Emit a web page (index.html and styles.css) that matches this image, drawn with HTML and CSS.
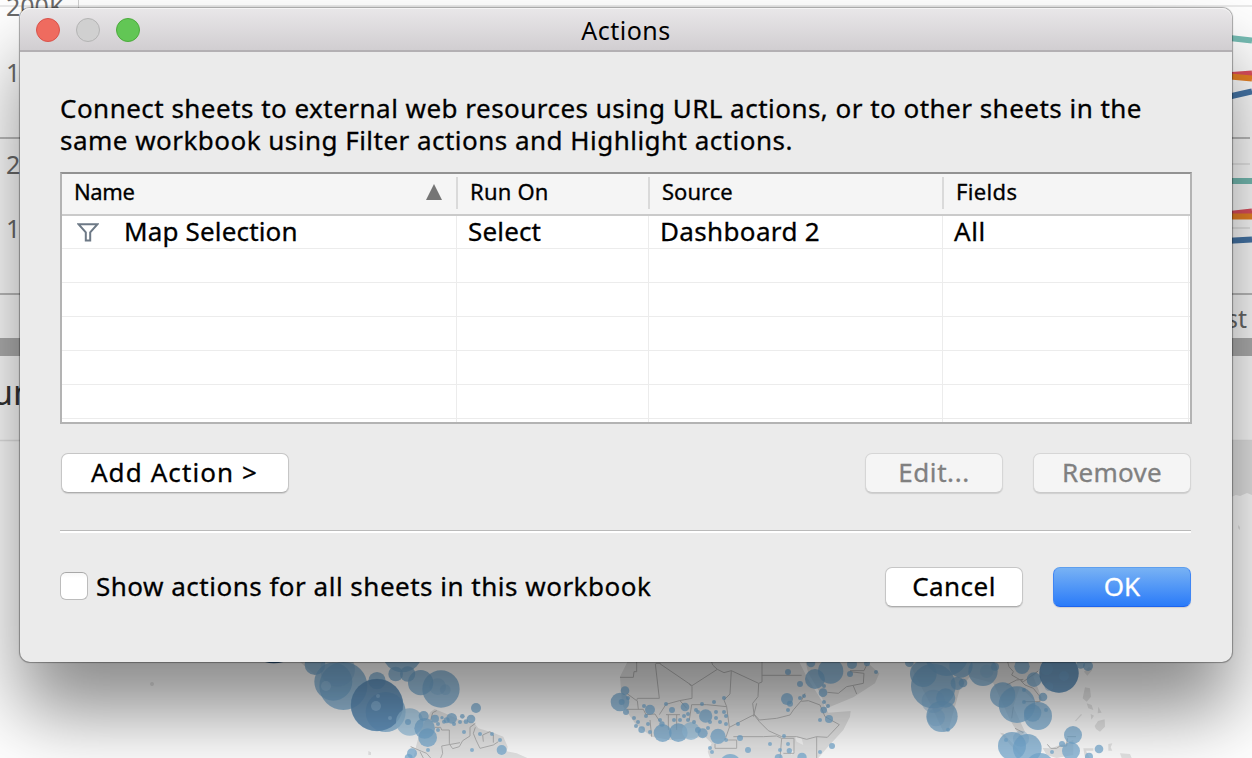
FILE: index.html
```
<!DOCTYPE html>
<html lang="en">
<head>
<meta charset="utf-8">
<title>Actions</title>
<link rel="stylesheet" href="styles.css">
</head>
<body>
<svg class="backdrop" viewBox="0 0 1252 758" aria-hidden="true">
  <g class="axis">
    <path class="rule-light" d="M0 6H1252M1232 164H1250M1232 228H1250M0 440.5H1252"/>
    <path class="rule-side" d="M78.500 0V137"/>
    <path class="rule" d="M0 138H1250M0 294H1252"/>
    <path class="bar" d="M0 338H1252V356H0z"/>
    <text x="6" y="16">200K</text>
    <text x="6" y="82">100K</text>
    <text x="6" y="174">200K</text>
    <text x="6" y="238">100K</text>
    <text x="1226" y="328">st</text>
    <text class="heading" x="-8" y="405">un</text>
  </g>
  <g class="lines">
    <path stroke="#76bdb4" d="M1225 37.500L1252 40.500M1225 181H1252"/>
    <path stroke="#dd4f5e" d="M1225 75.500L1252 73.500M1225 214.500L1252 211.500"/>
    <path stroke="#e98325" d="M1225 76L1252 78.500M1225 216.500H1252"/>
    <path stroke="#4676a8" d="M1225 97.500L1252 91.500M1225 241L1252 239.500"/>
  </g>
  <path class="land" d="M1225 441H1252V495L1247 493L1240 496L1236 495L1231 497zM1238 525l2 2v3l-2-2z"/>
  <g transform="translate(240 640) scale(.333333)">
    <path class="land" d="M520 354L530 312L545 260L572 215L584 207L620 222L660 240L700 245L715 265L760 278L790 290L803 320L800 334L830 340L862 354zM385 333l8 4v8h-8zM180 66L225 105L250 66z"/>
    <path class="border" d="M572 240L578 218L590 212M585 262H602L605 270H628V312L638 326L658 320L668 302L690 288V262L706 250M706 262L700 280L708 300L720 325L760 315L775 305M730 305L728 285L750 275L760 285V308M660 308L605 318L608 340L602 354M512 320L545 334L560 340L572 354M540 335L550 354"/>
    <path class="dots-dark" d="M75 66Q100 74 130 66z"/>
    <g class="bubbles">
      <circle cx="225" cy="74" r="31"/><circle cx="280" cy="125" r="57"/><circle cx="310" cy="138" r="72"/><circle cx="293" cy="88" r="52" opacity=".6"/>
      <circle cx="258" cy="138" r="15" class="pale"/><circle cx="411" cy="122" r="26"/><circle cx="411" cy="195" r="79"/><circle cx="437" cy="216" r="60"/><circle cx="411" cy="195" r="78" class="deep"/>
      <circle cx="408" cy="198" r="15" class="pale"/><circle cx="414" cy="168" r="6" class="pale"/><circle cx="450" cy="234" r="6" class="pale"/>
      <circle cx="487" cy="37" r="60"/><circle cx="467" cy="102" r="22"/><circle cx="503" cy="102" r="23"/><circle cx="542" cy="128" r="38"/><circle cx="603" cy="147" r="56"/><circle cx="593" cy="140" r="25" opacity=".5"/><circle cx="616" cy="149" r="16" opacity=".5"/>
      <circle cx="509" cy="246" r="41" class="soft"/><circle cx="504" cy="246" r="9"/><circle cx="551" cy="228" r="15"/><circle cx="554" cy="265" r="31"/><circle cx="563" cy="293" r="28"/><circle cx="585" cy="236" r="12"/>
      <circle cx="708" cy="204" r="15"/><circle cx="693" cy="237" r="13"/><circle cx="635" cy="235" r="16"/><circle cx="620" cy="241" r="9"/><circle cx="606" cy="233" r="5"/><circle cx="612" cy="245" r="6"/><circle cx="642" cy="252" r="6"/><circle cx="660" cy="246" r="6"/><circle cx="667" cy="229" r="7"/><circle cx="678" cy="245" r="7"/><circle cx="672" cy="276" r="6"/><circle cx="594" cy="252" r="6"/><circle cx="594" cy="270" r="6"/><circle cx="720" cy="282" r="6"/><circle cx="756" cy="282" r="6"/><circle cx="780" cy="300" r="6"/><circle cx="785" cy="330" r="15"/><circle cx="696" cy="330" r="6"/><circle cx="564" cy="330" r="6"/><circle cx="516" cy="340" r="15"/><circle cx="506" cy="354" r="12"/>
    </g>
  </g>
  <g transform="translate(560 640) scale(.333333)">
    <path class="land" d="M205 60L180 110L185 175L190 200L225 250L275 290L330 300L390 295L435 290L455 310L443 335L450 354H775L800 325L850 270L870 230L872 213L805 218L790 190L740 110L715 60zM735 60L745 100L775 150L800 205L880 172L945 130L958 100L920 66z"/>
    <path class="void" d="M705 290l20 5 5 20-20-10zM690 330l14 5-10 10z"/>
    <path class="border" d="M180 112H220L222 95H230V66M302 70H288L286 72L298 175H232L230 182L200 160M298 70L386 130L396 137L472 88L458 75L455 66M386 130L396 140V175L358 182L318 193L298 224M472 88L492 98L514 92L596 130L606 126V66M606 106H725M596 130L594 170L578 190L582 222L598 240L650 235L690 225L700 210L724 182L735 160M514 92L510 162L492 180L500 200L440 194L395 194L388 240M500 200L508 262L582 224L598 245L625 272L665 290L710 290L740 298L770 290L802 292L838 254L795 230L780 195L745 182L724 184M200 208H250L258 224L285 222L300 245M318 224H360M325 224V270M350 224V270M360 182L380 205M232 182L235 208M270 240L275 290M508 262L495 300M520 290H610L650 288L665 295L660 354M500 300H530V325H465V312M770 290V354M802 157L835 160L860 140L910 130L912 100L870 95M880 138L890 162M870 92H912L920 75M665 295H702V340H670M590 190L580 230"/>
    <g class="bubbles">
      <circle cx="180" cy="186" r="28"/><circle cx="195" cy="152" r="13"/><circle cx="185" cy="186" r="9"/><circle cx="198" cy="216" r="9"/><circle cx="270" cy="209" r="15"/><circle cx="308" cy="279" r="27"/><circle cx="355" cy="278" r="28"/><circle cx="393" cy="273" r="27" class="soft"/><circle cx="474" cy="289" r="23"/><circle cx="428" cy="280" r="15"/><circle cx="437" cy="228" r="20"/><circle cx="375" cy="201" r="13"/><circle cx="336" cy="210" r="9"/><circle cx="245" cy="269" r="10"/><circle cx="540" cy="294" r="9"/><circle cx="564" cy="330" r="9"/><circle cx="511" cy="374" r="32"/><circle cx="681" cy="177" r="18"/><circle cx="690" cy="191" r="9"/><circle cx="684" cy="96" r="9"/><circle cx="720" cy="132" r="9"/><circle cx="765" cy="117" r="30"/><circle cx="812" cy="93" r="38"/><circle cx="753" cy="69" r="13"/><circle cx="870" cy="102" r="9"/><circle cx="876" cy="72" r="15"/><circle cx="921" cy="70" r="9"/><circle cx="948" cy="96" r="6"/><circle cx="789" cy="158" r="13"/><circle cx="791" cy="210" r="10"/><circle cx="807" cy="237" r="12"/><circle cx="816" cy="318" r="9"/><circle cx="726" cy="352" r="14"/><circle cx="656" cy="354" r="12"/>
      <circle cx="222" cy="234" r="6"/><circle cx="234" cy="246" r="6"/><circle cx="228" cy="258" r="6"/><circle cx="252" cy="198" r="6"/><circle cx="258" cy="228" r="6"/><circle cx="264" cy="252" r="6"/><circle cx="270" cy="276" r="6"/><circle cx="300" cy="240" r="6"/><circle cx="306" cy="252" r="8"/><circle cx="318" cy="192" r="6"/><circle cx="342" cy="240" r="6"/><circle cx="360" cy="240" r="6"/><circle cx="372" cy="228" r="6"/><circle cx="384" cy="222" r="6"/><circle cx="384" cy="240" r="6"/><circle cx="402" cy="246" r="6"/><circle cx="408" cy="210" r="6"/><circle cx="414" cy="216" r="6"/><circle cx="426" cy="192" r="6"/><circle cx="462" cy="186" r="6"/><circle cx="492" cy="174" r="6"/><circle cx="468" cy="216" r="6"/><circle cx="468" cy="234" r="6"/><circle cx="492" cy="216" r="6"/><circle cx="498" cy="228" r="6"/><circle cx="498" cy="252" r="6"/><circle cx="480" cy="246" r="6"/><circle cx="450" cy="246" r="6"/><circle cx="444" cy="264" r="6"/><circle cx="414" cy="270" r="9"/><circle cx="534" cy="252" r="6"/><circle cx="450" cy="324" r="6"/><circle cx="456" cy="336" r="6"/><circle cx="498" cy="300" r="6"/><circle cx="630" cy="312" r="6"/><circle cx="672" cy="288" r="6"/><circle cx="684" cy="312" r="6"/><circle cx="660" cy="330" r="6"/><circle cx="688" cy="332" r="8"/><circle cx="684" cy="210" r="6"/><circle cx="720" cy="174" r="6"/><circle cx="732" cy="168" r="6"/><circle cx="792" cy="186" r="6"/><circle cx="804" cy="198" r="6"/><circle cx="780" cy="240" r="6"/><circle cx="780" cy="336" r="6"/><circle cx="792" cy="138" r="6"/><circle cx="204" cy="174" r="6"/>
    </g>
  </g>
  <g transform="translate(860 640) scale(.333333)">
    <path class="land" d="M145 66L215 200L250 275L265 272L300 145L330 110L400 130L450 240L480 290L495 275L460 200L480 140L530 190L548 180L520 110L560 66zM675 142l15 3 3 25-13 15-12-10zM680 190l15 5 5 15-15-5zM715 200l10 18-12 2zM692 222l10 5-8 12zM704 258l10-15 20-5 1 22-15 15-12-8zM645 242l18-20 3 2-18 20zM548 324L575 325L612 310L640 300V345L590 354L560 345zM420 278l10 2 60 66-10 3zM670 325h30v7h-22l12 22h-15zM745 312l12-2-5 12 5 10h-12zM780 340l30 2 5 12h-30zM672 95l15-15 10 10-15 17z"/>
    <path class="border" d="M443 66L447 80L460 95L455 105L490 125L535 93M440 135L470 120L490 118M482 122L495 135L520 145L540 170V185H490M460 200L455 235M465 265L490 278M562 313L572 325H590L600 318H620L622 295M622 290H648"/>
    <g class="bubbles">
      <circle cx="220" cy="138" r="67"/><circle cx="190" cy="101" r="40"/><circle cx="260" cy="42" r="66"/><circle cx="246" cy="229" r="47"/><circle cx="220" cy="184" r="35" opacity=".5"/><circle cx="257" cy="174" r="29"/><circle cx="228" cy="232" r="27" opacity=".5"/><circle cx="148" cy="68" r="13"/><circle cx="309" cy="129" r="13"/><circle cx="292" cy="130" r="20"/><circle cx="303" cy="78" r="35"/><circle cx="369" cy="94" r="44"/><circle cx="380" cy="94" r="20" opacity=".4"/><circle cx="405" cy="80" r="12"/>
      <circle cx="428" cy="165" r="38"/><circle cx="471" cy="194" r="55"/><circle cx="534" cy="228" r="42"/><circle cx="518" cy="219" r="26"/><circle cx="549" cy="171" r="13"/><circle cx="522" cy="119" r="22"/><circle cx="486" cy="79" r="23"/><circle cx="597" cy="99" r="59"/><circle cx="597" cy="99" r="59" class="deep"/><circle cx="560" cy="86" r="19" opacity=".5"/><circle cx="612" cy="108" r="15" opacity=".6"/><circle cx="567" cy="140" r="13" opacity=".5"/><circle cx="684" cy="78" r="15"/><circle cx="662" cy="73" r="13"/>
      <circle cx="456" cy="318" r="42"/><circle cx="502" cy="325" r="43"/><circle cx="483" cy="296" r="24" opacity=".5"/><circle cx="540" cy="384" r="45"/><circle cx="639" cy="285" r="27"/><circle cx="633" cy="333" r="27"/><circle cx="717" cy="327" r="13"/><circle cx="687" cy="350" r="12"/><circle cx="606" cy="312" r="9"/><circle cx="576" cy="336" r="6"/><circle cx="492" cy="150" r="6"/><circle cx="492" cy="186" r="6"/><circle cx="438" cy="300" r="6"/><circle cx="558" cy="210" r="6"/><circle cx="264" cy="269" r="6"/>
    </g>
  </g>
  <circle class="land" cx="152" cy="684" r="2"/>
</svg>

<main class="dialog">
  <header class="titlebar">
    <div class="lights"><i class="light close"></i><i class="light minimize"></i><i class="light zoom"></i></div>
    <h1 class="title">Actions</h1>
  </header>
  <div class="content">
    <p class="intro">Connect sheets to external web resources using URL actions, or to other sheets in the<br>same workbook using Filter actions and Highlight actions.</p>
    <div class="table">
      <div class="row head">
        <div class="cell"><span class="h-name">Name</span><svg class="sort" viewBox="0 0 16 16"><path d="M8 0L16 16H0z"/></svg></div>
        <div class="cell"><span class="h-run">Run On</span></div>
        <div class="cell"><span>Source</span></div>
        <div class="cell"><span class="h-fields">Fields</span></div>
      </div>
      <div class="row first">
        <div class="cell"><svg class="funnel" viewBox="0 0 22 19"><path d="M1.500 1.200H20.500L13.200 9.300V17.500H8.800V9.300z"/></svg><span class="c-name">Map Selection</span></div>
        <div class="cell"><span class="c-run">Select</span></div>
        <div class="cell"><span class="c-source">Dashboard 2</span></div>
        <div class="cell"><span class="c-fields">All</span></div>
        <div class="cell"></div>
      </div>
      <div class="row"><div class="cell"></div><div class="cell"></div><div class="cell"></div><div class="cell"></div><div class="cell"></div></div>
      <div class="row"><div class="cell"></div><div class="cell"></div><div class="cell"></div><div class="cell"></div><div class="cell"></div></div>
      <div class="row"><div class="cell"></div><div class="cell"></div><div class="cell"></div><div class="cell"></div><div class="cell"></div></div>
      <div class="row"><div class="cell"></div><div class="cell"></div><div class="cell"></div><div class="cell"></div><div class="cell"></div></div>
      <div class="row"><div class="cell"></div><div class="cell"></div><div class="cell"></div><div class="cell"></div><div class="cell"></div></div>
      <div class="row"><div class="cell"></div><div class="cell"></div><div class="cell"></div><div class="cell"></div><div class="cell"></div></div>
    </div>
    <div class="actions">
      <button class="button add">Add Action &gt;</button>
      <button class="button edit" disabled>Edit...</button>
      <button class="button remove" disabled>Remove</button>
    </div>
    <div class="divider"></div>
    <div class="footer">
      <label class="option"><i class="checkbox"></i><span class="option-text">Show actions for all sheets in this workbook</span></label>
      <button class="button cancel">Cancel</button>
      <button class="button ok">OK</button>
    </div>
  </div>
</main>
</body>
</html>
```

FILE: styles.css
```
* { box-sizing: border-box; }
body {
  margin: 0;
  width: 1252px;
  height: 758px;
  overflow: hidden;
  background: #fff;
  color: #000;
  font: 26px/32px "Noto Sans", "Open Sans", sans-serif;
}
.backdrop { position: absolute; left: 0; top: 0; width: 1252px; height: 758px; }
.axis text { font-size: 25px; fill: #6a6a6a; }
.axis .heading { font-size: 34px; fill: #333; }
.rule { fill: none; stroke: #bdbdbd; stroke-width: 2; }
.rule-side { fill: none; stroke: #cfcfcf; stroke-width: 1; }
.rule-light { fill: none; stroke: #e4e4e4; stroke-width: 1.500px; }
.bar { fill: #b0b0b0; }
.lines path { fill: none; stroke-width: 6; }
.land { fill: #e6e6e6; }
.void { fill: #f8f8f8; }
.border { fill: none; stroke: #b4b4b4; stroke-width: 3; stroke-linejoin: round; }
.bubbles circle { fill: #74aad2; fill-opacity: .72; }
.bubbles .pale { fill: #a3cdec; fill-opacity: .45; }
.bubbles .soft { fill: #98c5e3; fill-opacity: .72; }
.bubbles .deep { fill: #5484b0; fill-opacity: .6; }
.dots-dark { fill: #2f5f8e; }

.dialog {
  position: relative;
  width: 1212px;
  height: 654px;
  margin: 8px 20px;
  border-radius: 10px;
  background: #ebebeb;
  box-shadow: 0 0 1px 1px rgba(0, 0, 0, .34), 0 50px 76px rgba(0, 0, 0, .46);
  -webkit-text-stroke: .3px;
}
.titlebar {
  height: 44px;
  display: grid;
  grid-template-columns: 128px 1fr 128px;
  align-items: center;
  padding-top: 2px;
  border-bottom: 2px solid #b3b0b3;
  border-radius: 10px 10px 0 0;
  background: linear-gradient(#e9e7e9, #d1ced1);
  box-shadow: inset 0 1px 0 #f5f4f5;
}
.lights { display: flex; gap: 16px; padding-left: 16px; }
.light { width: 24px; height: 24px; border-radius: 50%; border: 1px solid; }
.close { background: #ef6b5f; border-color: #d9534b; }
.minimize { background: #d0d0d0; border-color: #b4b4b4; }
.zoom { background: #62c655; border-color: #4cab3c; }
.title { margin: 0; font-size: 25px; font-weight: 400; line-height: 32px; letter-spacing: .5px; text-align: center; -webkit-text-stroke: 0; }
.content { padding: 40px 40px 0; }
.intro { margin: 0; white-space: nowrap; letter-spacing: .475px; }

.table {
  width: 1132px;
  height: 252px;
  margin-top: 16px;
  overflow: hidden;
  border: 2px solid #b3b3b3;
  border-top-color: #929292;
  background: #fff;
}
.row { display: grid; grid-template-columns: 395px 192px 294px 246px 1fr; height: 34px; }
.cell { display: flex; align-items: center; border-right: 1px solid #ececec; border-bottom: 1px solid #ececec; white-space: nowrap; padding-left: 11px; }
.cell:last-child { border-right: 0; padding-left: 0; }
.first { height: 33px; }
.first .cell { line-height: 30px; }
.first .cell span { padding-bottom: 2px; }
.first .cell:first-child { padding-left: 15px; gap: 25px; }
.head {
  height: 42px;
  grid-template-columns: 396px 192px 294px 1fr;
  padding: 3px 0 5px;
  background: #f5f5f5;
  border-bottom: 2px solid #cacaca;
  font-size: 22px;
  line-height: 28px;
}
.head .cell { border-bottom: 0; border-right: 2px solid #dadada; padding-left: 12px; }
.head .cell:last-child { border-right: 0; padding-left: 12px; }
.head .cell span { padding-bottom: 4px; }
.sort { width: 16px; height: 16px; margin: 0 14px 3px auto; fill: #757575; }
.funnel { width: 22px; height: 19px; fill: none; stroke: #6d7986; stroke-width: 2; }
.h-name { letter-spacing: -.4px; }
.h-run { letter-spacing: .2px; }
.h-fields { letter-spacing: .35px; }
.c-name, .c-run { letter-spacing: .16px; }
.c-source { letter-spacing: .35px; }
.c-fields { letter-spacing: .6px; }

.actions { display: flex; margin-top: 29px; padding: 0 1px; }
.button {
  height: 40px;
  padding: 0 0 3px;
  border: 1px solid #c6c6c6;
  border-bottom-color: #adadad;
  border-radius: 7px;
  background: #fff;
  box-shadow: 0 1px 1px rgba(0, 0, 0, .12);
  color: #000;
  font: inherit;
  letter-spacing: .45px;
  white-space: nowrap;
  -webkit-text-stroke: .3px;
}
.button:disabled { color: #808080; background: #f5f5f5; border-color: #d6d6d6 #d6d6d6 #cacaca; }
.add { width: 228px; padding-right: 1px; letter-spacing: 1.1px; }
.edit { width: 138px; margin-left: auto; letter-spacing: .6px; }
.remove { width: 158px; margin-left: 30px; letter-spacing: .3px; }
.divider { height: 3px; margin: 37px 1px 0 0; border-top: 1px solid #bababa; background: #fff; }
.footer { display: flex; margin-top: 34px; padding-right: 1px; }
.option { display: flex; align-items: center; height: 38px; gap: 8px; }
.option-text { padding-bottom: 1px; letter-spacing: .5px; }
.checkbox { width: 28px; height: 28px; border: 1px solid #bcbcbc; border-top-color: #a8a8a8; border-radius: 6px; background: linear-gradient(#f7f7f7, #fff 20%); }
.cancel { width: 138px; margin-left: auto; }
.ok {
  width: 138px;
  margin-left: 30px;
  letter-spacing: 0;
  color: #fff;
  border-color: #5e9fee #4086f4 #1e64ee;
  background: linear-gradient(#78b2f4, #2a7bf9);
}
```
